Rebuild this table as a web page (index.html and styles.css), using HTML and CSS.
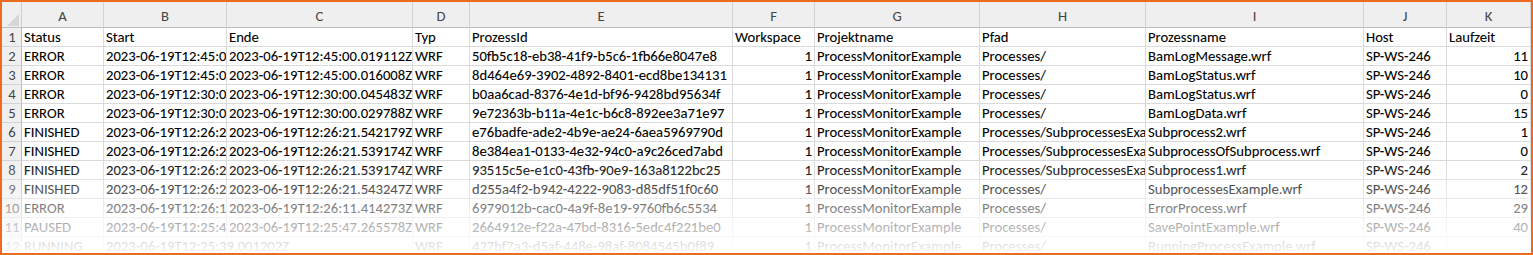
FILE: index.html
```html
<!DOCTYPE html>
<html lang="de">
<head>
<meta charset="utf-8">
<title>Prozesse</title>
<link rel="stylesheet" href="styles.css">
</head>
<body>
<div class="frame">
  <div class="sheet">
    <div class="corner"><svg width="12" height="12" viewBox="0 0 12 12"><polygon points="12,0 12,12 0,12" fill="#d6d6d6"/></svg></div>
    <div class="ch">A</div><div class="ch">B</div><div class="ch">C</div><div class="ch">D</div><div class="ch">E</div><div class="ch">F</div><div class="ch">G</div><div class="ch">H</div><div class="ch">I</div><div class="ch">J</div><div class="ch">K</div>

    <div class="rh">1</div><div class="c">Status</div><div class="c">Start</div><div class="c">Ende</div><div class="c">Typ</div><div class="c">ProzessId</div><div class="c">Workspace</div><div class="c">Projektname</div><div class="c">Pfad</div><div class="c">Prozessname</div><div class="c">Host</div><div class="c">Laufzeit</div>

    <div class="rh">2</div><div class="c">ERROR</div><div class="c">2023-06-19T12:45:00.003517Z</div><div class="c">2023-06-19T12:45:00.019112Z</div><div class="c">WRF</div><div class="c">50fb5c18-eb38-41f9-b5c6-1fb66e8047e8</div><div class="c n">1</div><div class="c">ProcessMonitorExample</div><div class="c">Processes/</div><div class="c">BamLogMessage.wrf</div><div class="c">SP-WS-246</div><div class="c n">11</div>

    <div class="rh">3</div><div class="c">ERROR</div><div class="c">2023-06-19T12:45:00.004102Z</div><div class="c">2023-06-19T12:45:00.016008Z</div><div class="c">WRF</div><div class="c">8d464e69-3902-4892-8401-ecd8be134131</div><div class="c n">1</div><div class="c">ProcessMonitorExample</div><div class="c">Processes/</div><div class="c">BamLogStatus.wrf</div><div class="c">SP-WS-246</div><div class="c n">10</div>

    <div class="rh">4</div><div class="c">ERROR</div><div class="c">2023-06-19T12:30:00.041211Z</div><div class="c">2023-06-19T12:30:00.045483Z</div><div class="c">WRF</div><div class="c">b0aa6cad-8376-4e1d-bf96-9428bd95634f</div><div class="c n">1</div><div class="c">ProcessMonitorExample</div><div class="c">Processes/</div><div class="c">BamLogStatus.wrf</div><div class="c">SP-WS-246</div><div class="c n">0</div>

    <div class="rh">5</div><div class="c">ERROR</div><div class="c">2023-06-19T12:30:00.014301Z</div><div class="c">2023-06-19T12:30:00.029788Z</div><div class="c">WRF</div><div class="c">9e72363b-b11a-4e1c-b6c8-892ee3a71e97</div><div class="c n">1</div><div class="c">ProcessMonitorExample</div><div class="c">Processes/</div><div class="c">BamLogData.wrf</div><div class="c">SP-WS-246</div><div class="c n">15</div>

    <div class="rh">6</div><div class="c">FINISHED</div><div class="c">2023-06-19T12:26:21.541002Z</div><div class="c">2023-06-19T12:26:21.542179Z</div><div class="c">WRF</div><div class="c">e76badfe-ade2-4b9e-ae24-6aea5969790d</div><div class="c n">1</div><div class="c">ProcessMonitorExample</div><div class="c">Processes/SubprocessesExample/</div><div class="c">Subprocess2.wrf</div><div class="c">SP-WS-246</div><div class="c n">1</div>

    <div class="rh">7</div><div class="c">FINISHED</div><div class="c">2023-06-19T12:26:21.538811Z</div><div class="c">2023-06-19T12:26:21.539174Z</div><div class="c">WRF</div><div class="c">8e384ea1-0133-4e32-94c0-a9c26ced7abd</div><div class="c n">1</div><div class="c">ProcessMonitorExample</div><div class="c">Processes/SubprocessesExample/</div><div class="c">SubprocessOfSubprocess.wrf</div><div class="c">SP-WS-246</div><div class="c n">0</div>

    <div class="rh">8</div><div class="c">FINISHED</div><div class="c">2023-06-19T12:26:21.536912Z</div><div class="c">2023-06-19T12:26:21.539174Z</div><div class="c">WRF</div><div class="c">93515c5e-e1c0-43fb-90e9-163a8122bc25</div><div class="c n">1</div><div class="c">ProcessMonitorExample</div><div class="c">Processes/SubprocessesExample/</div><div class="c">Subprocess1.wrf</div><div class="c">SP-WS-246</div><div class="c n">2</div>

    <div class="rh">9</div><div class="c">FINISHED</div><div class="c">2023-06-19T12:26:21.530127Z</div><div class="c">2023-06-19T12:26:21.543247Z</div><div class="c">WRF</div><div class="c">d255a4f2-b942-4222-9083-d85df51f0c60</div><div class="c n">1</div><div class="c">ProcessMonitorExample</div><div class="c">Processes/</div><div class="c">SubprocessesExample.wrf</div><div class="c">SP-WS-246</div><div class="c n">12</div>

    <div class="rh">10</div><div class="c">ERROR</div><div class="c">2023-06-19T12:26:11.385120Z</div><div class="c">2023-06-19T12:26:11.414273Z</div><div class="c">WRF</div><div class="c">6979012b-cac0-4a9f-8e19-9760fb6c5534</div><div class="c n">1</div><div class="c">ProcessMonitorExample</div><div class="c">Processes/</div><div class="c">ErrorProcess.wrf</div><div class="c">SP-WS-246</div><div class="c n">29</div>

    <div class="rh">11</div><div class="c">PAUSED</div><div class="c">2023-06-19T12:25:47.225101Z</div><div class="c">2023-06-19T12:25:47.265578Z</div><div class="c">WRF</div><div class="c">2664912e-f22a-47bd-8316-5edc4f221be0</div><div class="c n">1</div><div class="c">ProcessMonitorExample</div><div class="c">Processes/</div><div class="c">SavePointExample.wrf</div><div class="c">SP-WS-246</div><div class="c n">40</div>

    <div class="rh">12</div><div class="c">RUNNING</div><div class="c span2">2023-06-19T12:25:39.001202Z</div><div class="c">WRF</div><div class="c">427bf7a3-d5af-448e-98af-8084545b0f89</div><div class="c n">1</div><div class="c">ProcessMonitorExample</div><div class="c">Processes/</div><div class="c">RunningProcessExample.wrf</div><div class="c">SP-WS-246</div><div class="c n"></div>
  </div>
  <div class="fade"></div>
</div>
</body>
</html>
```

FILE: styles.css
```css
* { box-sizing: border-box; }
html, body { margin: 0; padding: 0; background: #ffffff; }

.frame {
  position: relative;
  width: 1533px;
  height: 255px;
  border: 2px solid #ef6a21;
  overflow: hidden;
  background: #ffffff;
}

.sheet {
  display: grid;
  grid-template-columns: 20px 82px 123px 186px 57px 263px 82px 165px 166px 218px 83px 84px;
  grid-template-rows: 26px;
  grid-auto-rows: 19px;
  font-family: Carlito, Lato, "Liberation Sans", sans-serif;
  font-size: 14.67px;
  color: #000000;
}

.corner {
  background: #efefef;
  border-right: 1px solid #d0d0d0;
  border-bottom: 1px solid #bdbdbd;
  display: flex;
  align-items: flex-end;
  justify-content: flex-end;
  padding: 0 2px 1px 0;
}
.corner svg { display: block; }

.ch {
  background: #efefef;
  border-right: 1px solid #d3d3d3;
  border-bottom: 1px solid #bdbdbd;
  color: #444444;
  display: flex;
  align-items: center;
  justify-content: center;
  padding-top: 2px;
}

.rh {
  background: #efefef;
  border-right: 1px solid #bdbdbd;
  border-bottom: 1px solid #d3d3d3;
  color: #444444;
  display: flex;
  align-items: center;
  justify-content: center;
  padding-left: 1px;
}

.c {
  border-right: 1px solid #dadada;
  border-bottom: 1px solid #dadada;
  padding: 0 2px 0 2px;
  white-space: nowrap;
  overflow: hidden;
  line-height: 18px;
  -webkit-text-stroke: 0.08px currentColor;
}
.c.n { text-align: right; }
.c.span2 { grid-column: span 2; }

.fade {
  position: absolute;
  left: 0;
  right: 0;
  bottom: 0;
  height: 95px;
  background: linear-gradient(to bottom, rgba(255,255,255,0) 0%, rgba(255,255,255,0.96) 100%);
  pointer-events: none;
}
```
